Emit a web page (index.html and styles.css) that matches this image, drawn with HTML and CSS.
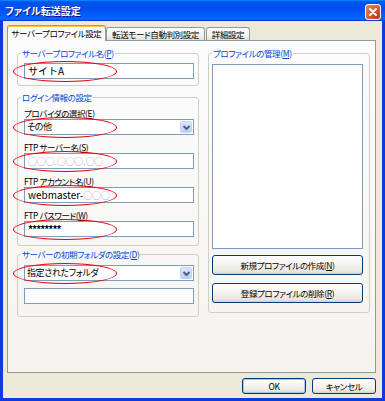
FILE: index.html
```html
<!DOCTYPE html>
<html lang="ja">
  <head>
    <meta charset="utf-8">
    <title>ファイル転送設定</title>
    <link rel="stylesheet" href="styles.css">
  </head>
  <body>
    <div class="window">
      <div class="titlebar">
        <span class="title">ファイル転送設定</span>
        <span class="close">
          <svg width="14" height="14" viewBox="0 0 14 14">
            <path d="M4 4 L10 10 M10 4 L4 10" stroke="#fff" stroke-width="2" stroke-linecap="round" fill="none"/>
          </svg>
        </span>
      </div>
      <div class="client">
        <div class="tabs">
          <div class="tab selected">サーバープロファイル設定</div>
          <div class="tab tab-mode">転送モード自動判別設定</div>
          <div class="tab tab-detail">詳細設定</div>
        </div>
        <div class="panel">
          <div class="col-left">
            <fieldset class="group g-name">
              <legend>サーバープロファイル名(<u>P</u>)</legend>
              <div class="field">
                <div class="edit">サイトA</div>
                <span class="mark"></span>
              </div>
            </fieldset>

            <fieldset class="group g-login">
              <legend>ログイン情報の設定</legend>
              <div class="label first">プロバイダの選択(<u>E</u>)</div>
              <div class="field">
                <div class="combo">
                  <span class="combo-text">その他</span>
                  <span class="combo-btn">
                    <svg width="9" height="9" viewBox="0 0 9 9">
                      <path d="M1.5 3 L4.5 6 L7.5 3" stroke="#4D6185" stroke-width="2" fill="none"/>
                    </svg>
                  </span>
                </div>
                <span class="mark"></span>
              </div>
              <div class="label">FTP サーバー名(<u>S</u>)</div>
              <div class="field">
                <div class="edit"><span class="ph">○○○.○○○.○○</span></div>
                <span class="mark"></span>
              </div>
              <div class="label">FTP アカウント名(<u>U</u>)</div>
              <div class="field">
                <div class="edit">webmaster-<span class="ph">○○○</span></div>
                <span class="mark"></span>
              </div>
              <div class="label">FTP パスワード(<u>W</u>)</div>
              <div class="field">
                <div class="edit pass">********</div>
                <span class="mark"></span>
              </div>
            </fieldset>

            <fieldset class="group g-folder">
              <legend>サーバーの初期フォルダの設定(<u>D</u>)</legend>
              <div class="field">
                <div class="combo">
                  <span class="combo-text">指定されたフォルダ</span>
                  <span class="combo-btn">
                    <svg width="9" height="9" viewBox="0 0 9 9">
                      <path d="M1.5 3 L4.5 6 L7.5 3" stroke="#4D6185" stroke-width="2" fill="none"/>
                    </svg>
                  </span>
                </div>
                <span class="mark"></span>
              </div>
              <div class="edit folder-path"></div>
            </fieldset>
          </div>

          <div class="col-right">
            <fieldset class="group g-manage">
              <legend>プロファイルの管理(<u>M</u>)</legend>
              <div class="listbox"></div>
              <button class="btn btn-new">新規プロファイルの作成(<u>N</u>)</button>
              <button class="btn btn-del">登録プロファイルの削除(<u>R</u>)</button>
            </fieldset>
          </div>
        </div>
        <div class="footer">
          <button class="btn default">OK</button>
          <button class="btn">キャンセル</button>
        </div>
      </div>
    </div>
  </body>
</html>
```

FILE: styles.css
```css
* {
  box-sizing: border-box;
}

body {
  margin: 0;
  font-family: "Noto Sans CJK JP", "Noto Sans", sans-serif;
  font-size: 8.5px;
  letter-spacing: -0.4px;
  font-feature-settings: "palt" 1;
  color: #000;
}

u {
  text-decoration-thickness: 1px;
  text-underline-offset: 1px;
}

.window {
  width: 385px;
  height: 401px;
  display: flex;
  flex-direction: column;
  background: #0A3DDB;
}

/* title bar */
.titlebar {
  height: 21px;
  display: flex;
  align-items: center;
  justify-content: space-between;
  padding: 0 4px 0 5px;
  background: linear-gradient(#0997FF, #0053EE 8%, #0050EE 40%, #0066FF 88%, #0066FF 93%, #005BFF 95%, #003DD7 96%, #003DD7);
}

.title {
  color: #fff;
  font-weight: bold;
  font-size: 10px;
  letter-spacing: 0;
  line-height: 12px;
  text-shadow: 1px 1px #0F1089;
}

.close {
  width: 16px;
  height: 16px;
  margin-top: 3px;
  display: flex;
  align-items: center;
  justify-content: center;
  border: 1px solid #fff;
  border-radius: 3px;
  background: radial-gradient(circle at 85% 85%, #C43A0C, #DA5A2C 50%, #EC8E6A);
}

/* client area */
.client {
  flex: 1;
  margin: 0 3px 3px;
  padding: 4px 6px 4px 4px;
  background: #ECE9D8;
  display: flex;
  flex-direction: column;
}

.tabs {
  display: flex;
  align-items: flex-end;
  height: 16px;
  margin-bottom: -1px;
  position: relative;
  z-index: 1;
}

.tab {
  height: 13px;
  margin-bottom: 1px;
  width: 99px;
  border: 1px solid #919B9C;
  border-bottom: none;
  border-radius: 3px 3px 0 0;
  background: linear-gradient(#FFFFFF, #F3F2EC 60%, #E3E1D8);
  line-height: 12px;
  text-align: center;
  white-space: nowrap;
  overflow: hidden;
}

.tab.selected {
  height: 16px;
  margin-bottom: 0;
  border-top-color: #E68B2C;
  box-shadow: inset 0 1px #FFC73C;
  background: #FCFCFE;
  line-height: 15px;
}

.tab-detail {
  width: 44px;
  margin-left: 1px;
}

.panel {
  flex: 1;
  display: flex;
  align-items: flex-start;
  gap: 9px;
  padding: 6px 5px 0 9px;
  border: 1px solid #919B9C;
  background: linear-gradient(#FCFCFE, #F4F3EE);
}

.col-left {
  width: 182px;
  display: flex;
  flex-direction: column;
}

.col-right {
  width: 162px;
}

/* group boxes */
.group {
  margin: 0;
  min-width: 0;
  border: 1px solid #D0D0BF;
  border-radius: 3px;
  padding: 0 4px 6px 6px;
}

.group legend {
  color: #0046D5;
  line-height: 12px;
  padding: 0 1px;
  margin-left: -3px;
}

.g-name .field {
  margin-top: 4px;
}

.g-login {
  margin-top: 5px;
  padding-bottom: 8px;
}

.g-folder {
  margin-top: 2px;
  padding-bottom: 12px;
}

.g-folder .field {
  margin-top: 5px;
}

.g-manage {
  padding: 0 6px 9px 3px;
}

.g-manage legend {
  margin-left: 0;
}

.label {
  line-height: 12px;
  margin-top: 6px;
  white-space: nowrap;
}

.label.first {
  margin-top: 4px;
}

/* fields */
.field {
  position: relative;
}

.edit {
  height: 16px;
  border: 1px solid #7F9DB9;
  background: #fff;
  padding: 0 3px;
  font-size: 10px;
  letter-spacing: 0;
  font-feature-settings: normal;
  line-height: 14px;
  white-space: nowrap;
  overflow: hidden;
}

.edit .ph {
  color: #A4A4A4;
  font-size: 9px;
  letter-spacing: -0.2px;
}

.edit.pass {
  font-weight: bold;
  letter-spacing: -1px;
}

.folder-path {
  margin-top: 7px;
}

.combo {
  height: 16px;
  display: flex;
  border: 1px solid #7F9DB9;
  background: #fff;
}

.combo-text {
  flex: 1;
  padding-left: 2px;
  font-size: 9px;
  line-height: 14px;
  white-space: nowrap;
}

.combo-btn {
  width: 12px;
  margin: 1px;
  display: flex;
  align-items: center;
  justify-content: center;
  border: 1px solid #C3D3F6;
  border-radius: 2px;
  background: linear-gradient(#DCE6FD, #BDD0F8);
}

/* red annotation ellipses */
.mark {
  position: absolute;
  left: -11px;
  top: -2px;
  width: 104px;
  height: 21px;
  border: 1.5px solid #E60012;
  border-radius: 50%;
  pointer-events: none;
}

.listbox {
  height: 185px;
  margin-top: 5px;
  border: 1px solid #7F9DB9;
  background: #fff;
}

/* push buttons */
.btn {
  display: block;
  width: 100%;
  height: 20px;
  padding: 0;
  font: inherit;
  letter-spacing: inherit;
  font-feature-settings: "palt" 1;
  color: #000;
  border: 1px solid #003C74;
  border-radius: 3px;
  background: linear-gradient(#FFFFFF, #F5F4EF 45%, #E9E7DE 85%, #D6D0C5);
  white-space: nowrap;
}

.btn-new {
  margin-top: 6px;
}

.btn-del {
  margin-top: 8px;
}

.footer {
  display: flex;
  justify-content: flex-end;
  gap: 6px;
  margin-top: 5px;
}

.footer .btn {
  width: 64px;
  height: 16px;
  line-height: 14px;
}

.footer .btn.default {
  box-shadow: inset 0 0 0 1px #A7C3F0;
}
```
